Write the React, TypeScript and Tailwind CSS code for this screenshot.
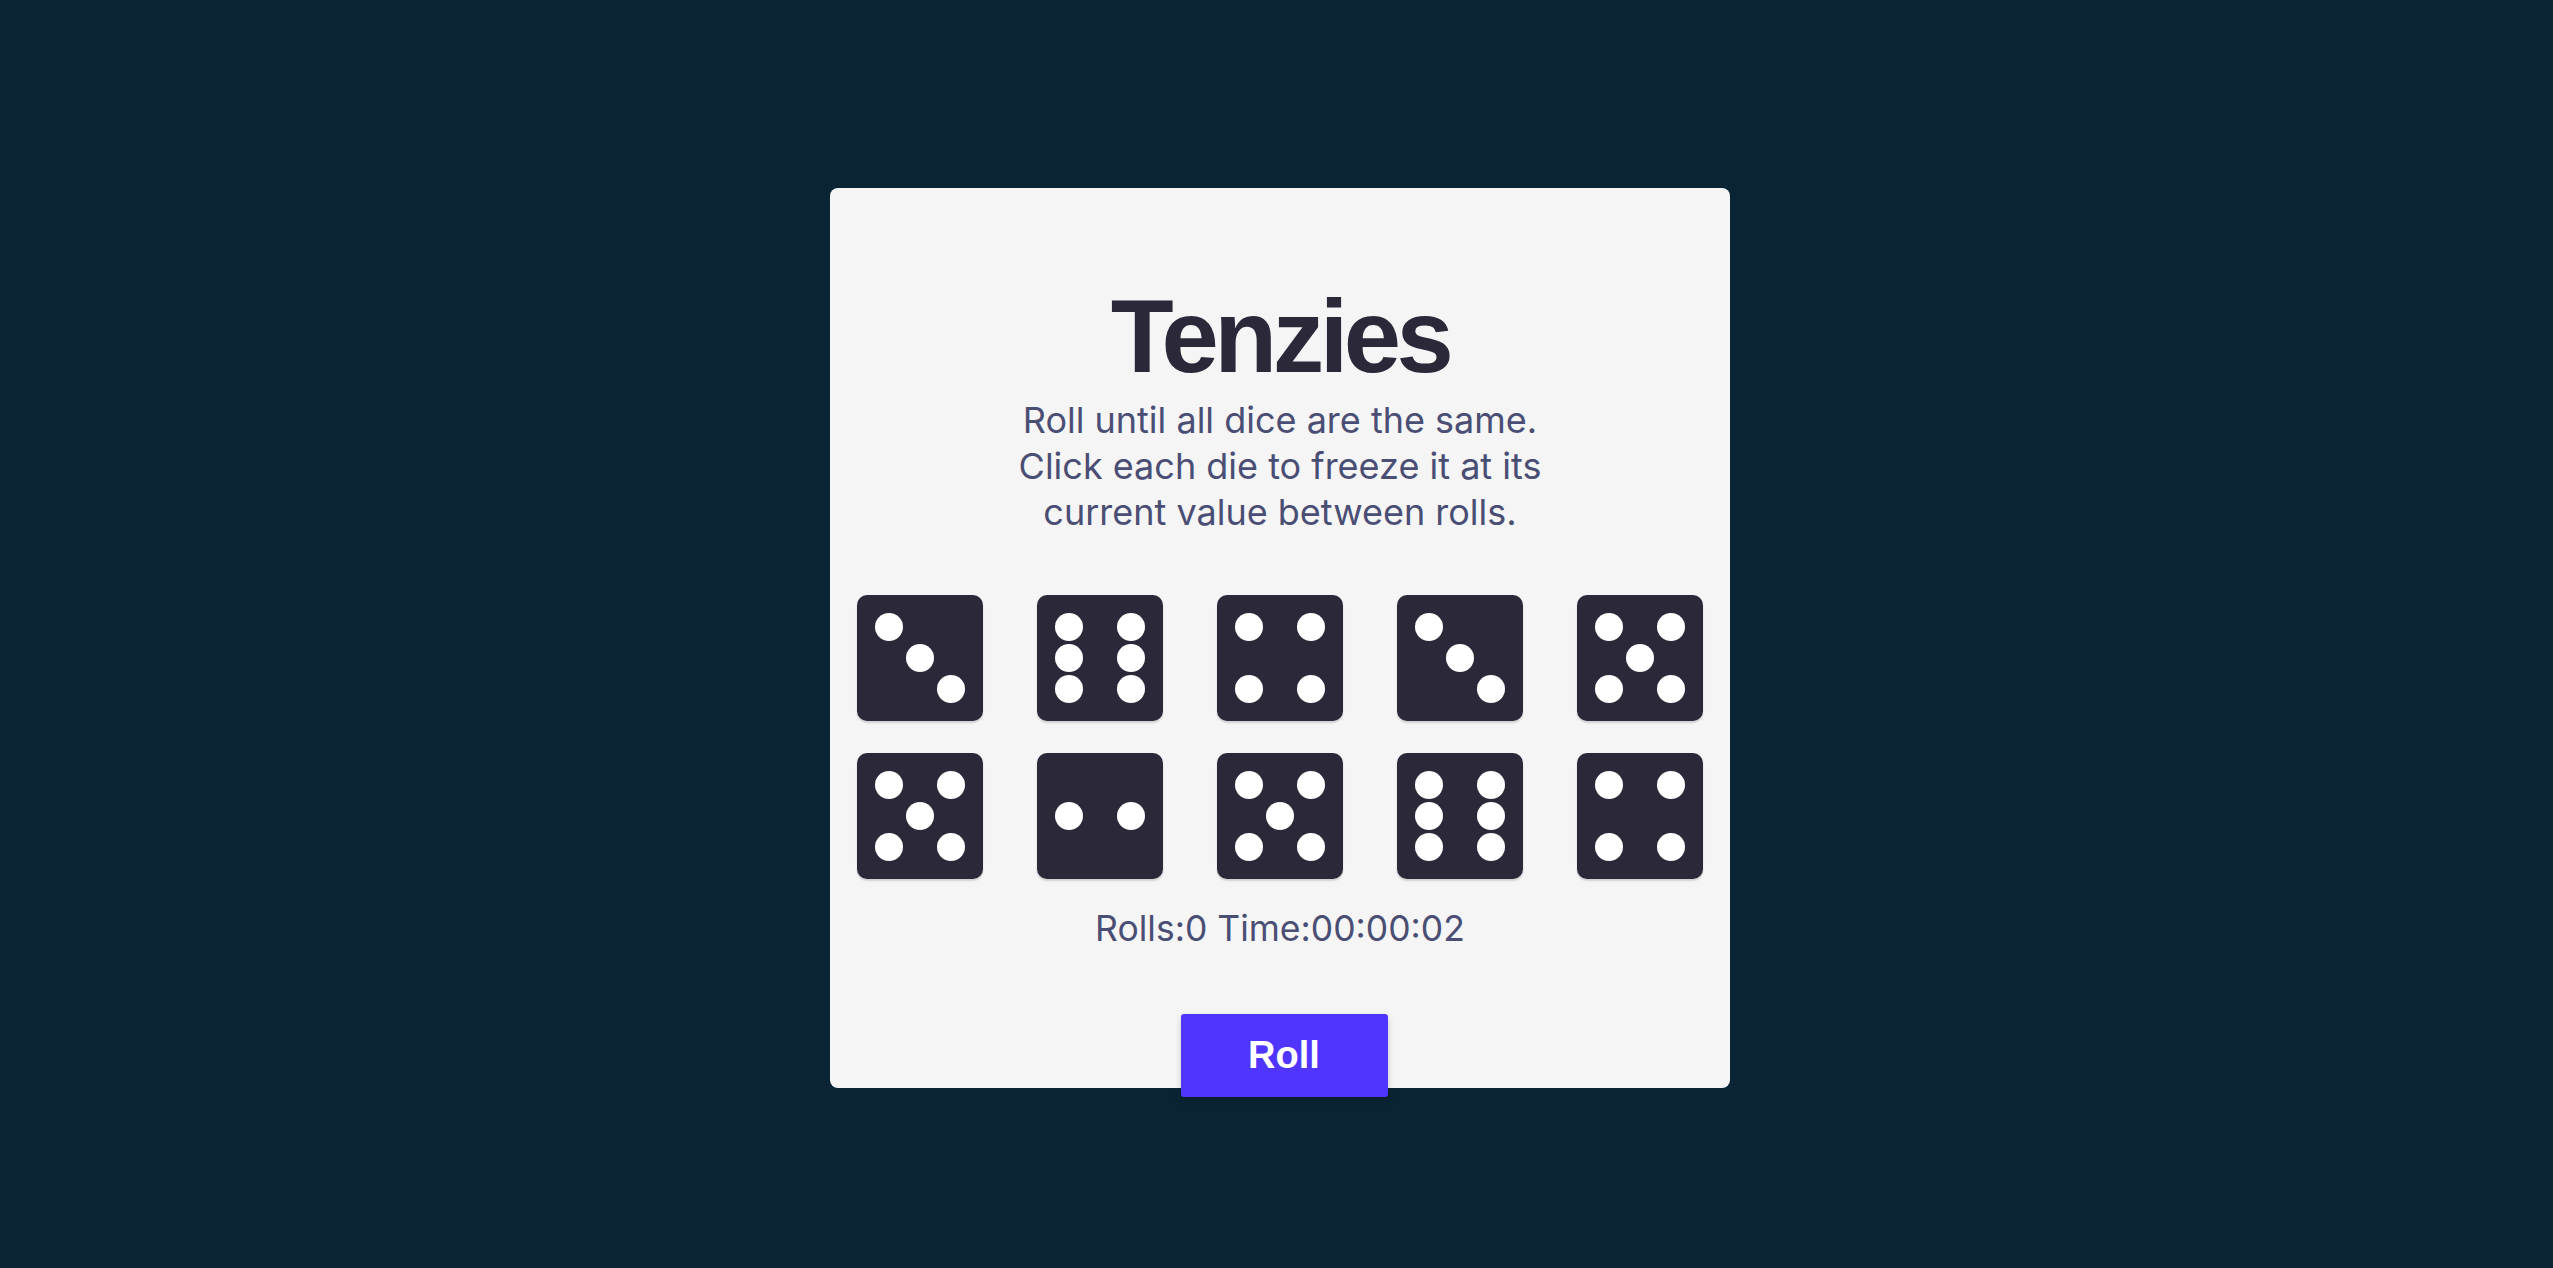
const dice = [3, 6, 4, 3, 5, 5, 2, 5, 6, 4];

// pip cells on a 3x3 grid, class names spelled out for tailwind
const cell: Record<string, string> = {
  "1-1": "col-start-1 row-start-1",
  "2-1": "col-start-2 row-start-1",
  "3-1": "col-start-3 row-start-1",
  "1-2": "col-start-1 row-start-2",
  "2-2": "col-start-2 row-start-2",
  "3-2": "col-start-3 row-start-2",
  "1-3": "col-start-1 row-start-3",
  "2-3": "col-start-2 row-start-3",
  "3-3": "col-start-3 row-start-3",
};

const faces: Record<number, string[]> = {
  1: ["2-2"],
  2: ["1-2", "3-2"],
  3: ["1-1", "2-2", "3-3"],
  4: ["1-1", "3-1", "1-3", "3-3"],
  5: ["1-1", "3-1", "2-2", "1-3", "3-3"],
  6: ["1-1", "3-1", "1-2", "3-2", "1-3", "3-3"],
};

const Die = ({ value }: { value: number }) => {
  return (
    <button className="w-[126px] h-[126px] rounded-[10px] bg-[#2B283A] shadow-[0_2px_2px_rgba(0,0,0,0.15)] flex items-center justify-center cursor-pointer">
      <div className="grid grid-cols-[repeat(3,28px)] grid-rows-[repeat(3,28px)] gap-[3px]">
        {faces[value].map((p) => (
          <span key={p} className={`${cell[p]} w-[28px] h-[28px] rounded-full bg-white`} />
        ))}
      </div>
    </button>
  );
};

const App = () => {
  return (
    <div className="min-h-screen bg-[#0B2434] flex items-center justify-center pl-[7px] pt-[8px]">
      <main className="w-[900px] h-[900px] bg-[#F5F5F5] rounded-[8px] flex flex-col items-center pt-[97px]">
        <h1
          className="text-[103px] leading-none font-bold tracking-[-0.044em] text-[#2B283A]"
          style={{ fontFamily: '"Liberation Sans", Arial, sans-serif' }}
        >
          Tenzies
        </h1>
        <p
          className="mt-[9px] w-[560px] text-center text-[36px] leading-[46px] text-[#4A4E74]"
          style={{ fontFamily: "Inter, sans-serif" }}
        >
          Roll until all dice are the same. Click each die to freeze it at its current value between rolls.
        </p>
        <div className="mt-[60px] grid grid-cols-5 gap-x-[54px] gap-y-[32px]">
          {dice.map((d, i) => (
            <Die key={i} value={d} />
          ))}
        </div>
        <p
          className="mt-[27px] text-[35.5px] leading-[46px] text-[#4A4E74]"
          style={{ fontFamily: "Inter, sans-serif" }}
        >
          Rolls:0 Time:00:00:02
        </p>
        <button
          className="mt-[62px] ml-[8px] w-[207px] h-[83px] shrink-0 rounded-[3px] bg-[#5035FF] text-white text-[38px] font-bold shadow-[0_3px_6px_rgba(0,0,0,0.18)] cursor-pointer"
          style={{ fontFamily: '"Liberation Sans", Arial, sans-serif' }}
        >
          Roll
        </button>
      </main>
    </div>
  );
};

export default App;
